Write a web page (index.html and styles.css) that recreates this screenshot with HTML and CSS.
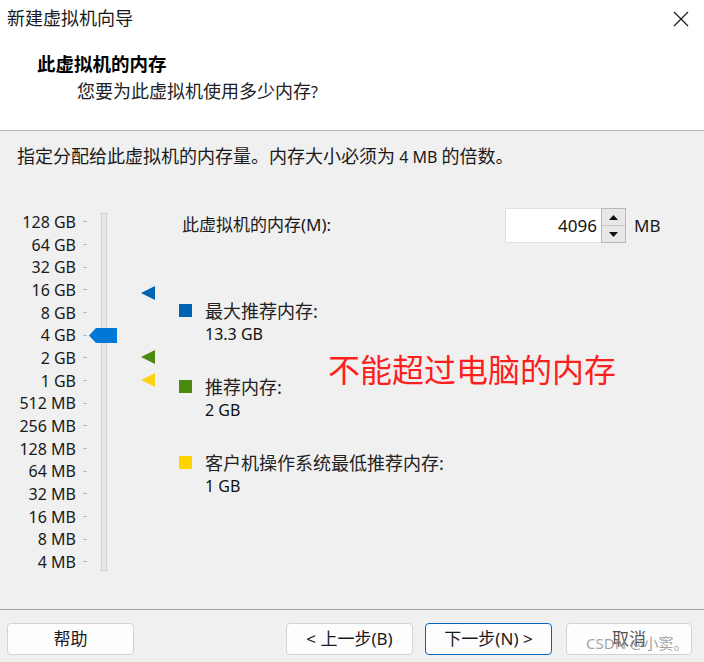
FILE: index.html
```html
<!DOCTYPE html>
<html lang="zh-CN">
<head>
<meta charset="utf-8">
<title>新建虚拟机向导</title>
<link rel="stylesheet" href="styles.css">
</head>
<body>
<div class="window">
  <div class="titlebar">
    <span class="title">新建虚拟机向导</span>
    <svg class="close" width="16" height="16" viewBox="0 0 16 16"><path d="M1 1 L15 15 M15 1 L1 15" stroke="#1a1a1a" stroke-width="1.2" fill="none"/></svg>
  </div>
  <div class="header">
    <div class="h-title">此虚拟机的内存</div>
    <div class="h-sub">您要为此虚拟机使用多少内存<span class="lat">?</span></div>
  </div>
  <div class="content">
    <p class="intro">指定分配给此虚拟机的内存量。内存大小必须为<span class="lat"> 4 MB </span>的倍数。</p>
    <div class="main">
      <div class="slider">
        <ul class="scale">
          <li><span>128 GB</span><i class="tick"></i></li>
          <li><span>64 GB</span><i class="tick"></i></li>
          <li><span>32 GB</span><i class="tick"></i></li>
          <li><span>16 GB</span><i class="tick"></i></li>
          <li><span>8 GB</span><i class="tick"></i></li>
          <li><span>4 GB</span><i class="tick"></i></li>
          <li><span>2 GB</span><i class="tick"></i></li>
          <li><span>1 GB</span><i class="tick"></i></li>
          <li><span>512 MB</span><i class="tick"></i></li>
          <li><span>256 MB</span><i class="tick"></i></li>
          <li><span>128 MB</span><i class="tick"></i></li>
          <li><span>64 MB</span><i class="tick"></i></li>
          <li><span>32 MB</span><i class="tick"></i></li>
          <li><span>16 MB</span><i class="tick"></i></li>
          <li><span>8 MB</span><i class="tick"></i></li>
          <li><span>4 MB</span><i class="tick"></i></li>
        </ul>
        <div class="track"></div>
        <svg class="thumb" style="top:119.5px" width="28" height="15" viewBox="0 0 28 15"><path d="M0 7.5 L7 0 H28 V15 H7 Z" fill="#0078d7"/></svg>
        <svg class="marker" style="top:78px" width="14" height="14" viewBox="0 0 14 14"><path d="M0 7 L14 0 V14 Z" fill="#0063b1"/></svg>
        <svg class="marker" style="top:142px" width="14" height="14" viewBox="0 0 14 14"><path d="M0 7 L14 0 V14 Z" fill="#4b8a10"/></svg>
        <svg class="marker" style="top:165px" width="14" height="14" viewBox="0 0 14 14"><path d="M0 7 L14 0 V14 Z" fill="#fcd116"/></svg>
      </div>
      <div class="panel">
        <div class="mem-row">
          <span class="mem-label">此虚拟机的内存<span class="lat">(M):</span></span>
          <div class="spin">
            <div class="field">4096</div>
            <div class="spin-btns">
              <div class="sbtn"><svg width="9" height="5" viewBox="0 0 9 5"><path d="M0 5 L4.5 0 L9 5 Z" fill="#111"/></svg></div>
              <div class="sbtn"><svg width="9" height="5" viewBox="0 0 9 5"><path d="M0 0 L9 0 L4.5 5 Z" fill="#111"/></svg></div>
            </div>
          </div>
          <span class="unit">MB</span>
        </div>
        <div class="legend">
          <div class="item">
            <i class="sq blue"></i>
            <div class="txt"><div class="lbl">最大推荐内存<span class="lat">:</span></div><div class="val">13.3 GB</div></div>
          </div>
          <div class="item">
            <i class="sq green"></i>
            <div class="txt"><div class="lbl">推荐内存<span class="lat">:</span></div><div class="val">2 GB</div></div>
          </div>
          <div class="item">
            <i class="sq yellow"></i>
            <div class="txt"><div class="lbl">客户机操作系统最低推荐内存<span class="lat">:</span></div><div class="val">1 GB</div></div>
          </div>
        </div>
      </div>
    </div>
  </div>
  <div class="footer">
    <button class="btn">帮助</button>
    <button class="btn back">&lt; 上一步(B)</button>
    <button class="btn next">下一步(N) &gt;</button>
    <button class="btn cancel">取消</button>
  </div>
  <div class="annot">不能超过电脑的内存</div>
  <div class="watermark">CSDN @小窦。</div>
</div>
</body>
</html>
```

FILE: styles.css
```css
* { box-sizing: border-box; }
html, body { margin: 0; padding: 0; }
body {
  width: 704px;
  height: 662px;
  overflow: hidden;
  background: #f0f0f0;
  font-family: "Noto Sans", "Noto Sans CJK SC", sans-serif;
  color: #1a1a1a;
}
.window {
  position: relative;
  width: 704px;
  height: 662px;
  display: flex;
  flex-direction: column;
  background: #f0f0f0;
}
.lat { font-size: 16px; }

.titlebar {
  height: 36px;
  background: #fff;
  display: flex;
  align-items: center;
  justify-content: space-between;
  padding: 0 15px 0 7px;
}
.title { font-size: 18px; line-height: 24px; color: #1a1a1a; }
.close { display: block; margin-top: 1px; }

.header {
  height: 95px;
  background: #fff;
  border-bottom: 1px solid #b4b4b4;
  padding: 16px 0 0 37px;
}
.h-title { font-size: 18.5px; font-weight: 700; line-height: 24px; color: #000; }
.h-sub { font-size: 18px; line-height: 24px; margin: 3px 0 0 40px; color: #222; }

.content {
  flex: 1;
  padding: 13px 0 0 0;
}
.intro {
  margin: 0 0 0 17px;
  font-size: 18px;
  line-height: 24px;
  color: #1a1a1a;
}
.main {
  display: flex;
  margin-top: 39px;
}
.slider {
  position: relative;
  display: flex;
  padding-top: 2.67px;
  width: 107px;
}
.scale {
  list-style: none;
  margin: 0;
  padding: 0;
  width: 87px;
}
.scale li {
  height: 22.67px;
  display: flex;
  align-items: center;
  justify-content: flex-end;
  font-size: 16px;
  color: #1a1a1a;
}
.scale li span { width: 76px; text-align: right; margin-right: 7px; line-height: 20px; }
.tick { display: block; width: 4px; height: 1px; background: #b8b8b8; }
.track {
  width: 6px;
  height: 358px;
  margin: 2px 0 0 14px;
  background: #e6e6e6;
  border: 1px solid #d4d4d4;
}
.thumb { position: absolute; left: 89px; }
.marker { position: absolute; left: 141px; }

.panel {
  margin-left: 72px;
  flex: 1;
}
.mem-row {
  display: flex;
  align-items: center;
  height: 35px;
}
.mem-label {
  font-size: 17px;
  line-height: 24px;
  margin-left: 3px;
  width: 323px;
  margin-top: -2px;
}
.mem-label .lat { font-size: 17px; }
.spin {
  display: flex;
  height: 35px;
}
.field {
  width: 96px;
  height: 35px;
  background: #fff;
  border: 1px solid #e0e0e0;
  border-right: none;
  font-size: 17px;
  line-height: 33px;
  text-align: right;
  padding-right: 4px;
  color: #111;
}
.spin-btns {
  width: 25px;
  display: flex;
  flex-direction: column;
  border: 1px solid #b8b8b8;
}
.sbtn {
  flex: 1;
  background: #e8e8e8;
  display: flex;
  align-items: center;
  justify-content: center;
}
.sbtn + .sbtn { border-top: 1px solid #c4c4c4; }
.sbtn svg { display: block; }
.unit { font-size: 17px; margin-left: 8px; color: #1a1a1a; }

.legend {
  margin-top: 57px;
  display: flex;
  flex-direction: column;
  gap: 30px;
}
.item { display: flex; align-items: flex-start; }
.sq { display: block; width: 13px; height: 13px; margin: 4px 13px 0 0; }
.sq.blue { background: #0063b1; }
.sq.green { background: #4b8a10; }
.sq.yellow { background: #ffd400; }
.txt { line-height: 23px; }
.lbl { font-size: 18px; color: #222; }
.lbl .lat { font-size: 18px; }
.val { font-size: 16px; color: #111; }

.footer {
  height: 53px;
  border-top: 1px solid #a8a8a8;
  display: flex;
  align-items: flex-start;
  padding: 13px 12px 0 7px;
  gap: 12px;
}
.btn {
  width: 127px;
  height: 32px;
  margin: 0;
  padding: 0;
  border: 1px solid #d3d3d3;
  border-radius: 4px;
  background: #fdfdfd;
  font-family: "Noto Sans", "Noto Sans CJK SC", sans-serif;
  font-size: 17px;
  color: #1a1a1a;
  line-height: 28px;
}
.back { margin-left: auto; }
.next { border-color: #0067c0; }
.cancel { width: 126px; margin-left: 2px; color: #555; }

.annot {
  position: absolute;
  left: 328px;
  top: 351px;
  font-size: 32px;
  line-height: 34px;
  color: #ff1e1e;
  font-family: "Noto Sans CJK SC", sans-serif;
}
.watermark {
  position: absolute;
  left: 586px;
  top: 633px;
  font-size: 15px;
  line-height: 20px;
  color: rgba(140, 140, 140, 0.8);
  font-family: "Noto Sans", "Noto Sans CJK SC", sans-serif;
  white-space: nowrap;
}
```
